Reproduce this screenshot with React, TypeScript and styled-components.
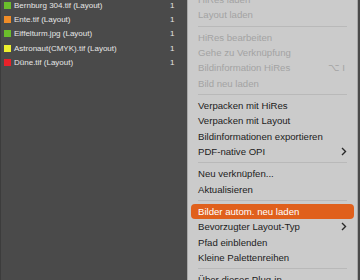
import React from "react";
import styled, { createGlobalStyle } from "styled-components";

const GlobalStyle = createGlobalStyle`
  html, body {
    margin: 0;
    padding: 0;
    background: #4a4a4a;
    overflow: hidden;
  }
  #root {
    width: 360px;
    height: 280px;
  }
`;

const Screen = styled.div`
  position: relative;
  width: 360px;
  height: 280px;
  background: #4a4a4a;
  border-left: 1px solid #3c3c3c;
  box-sizing: border-box;
  overflow: hidden;
  font-family: "Liberation Sans", Arial, sans-serif;
`;

const List = styled.div`
  display: flex;
  flex-direction: column;
  margin-top: -1.5px;
  width: 182px;
`;

const LinkRow = styled.div`
  display: flex;
  align-items: center;
  height: 14.2px;
  padding-left: 3px;
  color: #e6e6e6;
  font-size: 8px;
`;

const Swatch = styled.span<{ $color: string }>`
  width: 7px;
  height: 7px;
  background: ${(p) => p.$color};
  margin-right: 3px;
  flex: none;
`;

const LinkName = styled.span`
  flex: 1;
`;

const Count = styled.span`
  width: 13px;
`;

const Menu = styled.div`
  position: absolute;
  left: 186px;
  top: -14px;
  width: 171px;
  padding: 5px 0;
  background: #cbcbcb;
  border: 1px solid #a8a8a8;
  border-radius: 6px;
  box-sizing: border-box;
  display: flex;
  flex-direction: column;
`;

const Item = styled.div<{ $disabled?: boolean; $active?: boolean }>`
  display: flex;
  align-items: center;
  height: 15.33px;
  margin: 0 3px;
  padding: 0 7px;
  border-radius: 4px;
  font-size: 9.6px;
  color: ${(p) => (p.$active ? "#ffffff" : p.$disabled ? "#a3a3a3" : "#1c1c1c")};
  background: ${(p) => (p.$active ? "#e0601c" : "transparent")};
  white-space: nowrap;
`;

const Label = styled.span`
  flex: 1;
`;

const Shortcut = styled.span`
  font-size: 9.6px;
  color: #a3a3a3;
  letter-spacing: 2px;
`;

const Separator = styled.div`
  height: 1px;
  margin: 3px 10px;
  background: #b9b9b9;
`;

const Chevron = () => (
  <svg width="6" height="9" viewBox="0 0 6 9">
    <path d="M1 1l3.5 3.5L1 8" fill="none" stroke="#2a2a2a" strokeWidth="1.4" />
  </svg>
);

const links = [
  { name: "Bernburg 304.tif (Layout)", color: "#6bbd2b" },
  { name: "Ente.tif (Layout)", color: "#f08c28" },
  { name: "Eiffelturm.jpg (Layout)", color: "#6bbd2b" },
  { name: "Astronaut(CMYK).tif (Layout)", color: "#eef02e" },
  { name: "Düne.tif (Layout)", color: "#e8222a" },
];

type Entry =
  | "sep"
  | { label: string; disabled?: boolean; active?: boolean; shortcut?: string; sub?: boolean };

const menu: Entry[] = [
  { label: "HiRes laden", disabled: true },
  { label: "Layout laden", disabled: true },
  "sep",
  { label: "HiRes bearbeiten", disabled: true },
  { label: "Gehe zu Verknüpfung", disabled: true },
  { label: "Bildinformation HiRes", disabled: true, shortcut: "⌥I" },
  { label: "Bild neu laden", disabled: true },
  "sep",
  { label: "Verpacken mit HiRes" },
  { label: "Verpacken mit Layout" },
  { label: "Bildinformationen exportieren" },
  { label: "PDF-native OPI", sub: true },
  "sep",
  { label: "Neu verknüpfen..." },
  { label: "Aktualisieren" },
  "sep",
  { label: "Bilder autom. neu laden", active: true },
  { label: "Bevorzugter Layout-Typ", sub: true },
  { label: "Pfad einblenden" },
  { label: "Kleine Palettenreihen" },
  "sep",
  { label: "Über dieses Plug-in" },
];

export default function App() {
  return (
    <>
      <GlobalStyle />
      <Screen>
        <List>
          {links.map((l) => (
            <LinkRow key={l.name}>
              <Swatch $color={l.color} />
              <LinkName>{l.name}</LinkName>
              <Count>1</Count>
            </LinkRow>
          ))}
        </List>
        <Menu>
          {menu.map((m, i) =>
            m === "sep" ? (
              <Separator key={i} />
            ) : (
              <Item key={i} $disabled={m.disabled} $active={m.active}>
                <Label>{m.label}</Label>
                {m.shortcut && <Shortcut>{m.shortcut}</Shortcut>}
                {m.sub && <Chevron />}
              </Item>
            )
          )}
        </Menu>
      </Screen>
    </>
  );
}
